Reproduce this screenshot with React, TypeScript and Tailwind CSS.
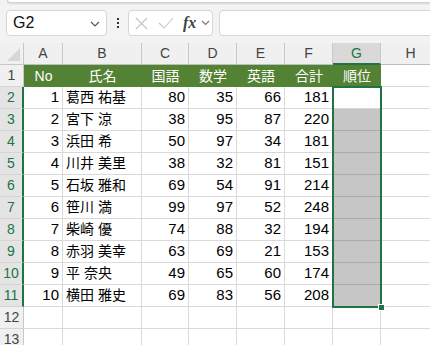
import React from "react";

const NUM = { fontFamily: '"Liberation Sans Narrow", "Liberation Sans", Arial, sans-serif' };
const JP = { fontFamily: '"Liberation Sans", "Noto Sans CJK JP", sans-serif' };

type Row = [number, string, number, number, number, number];
const data: Row[] = [
  [1, "葛西 祐基", 80, 35, 66, 181],
  [2, "宮下 涼", 38, 95, 87, 220],
  [3, "浜田 希", 50, 97, 34, 181],
  [4, "川井 美里", 38, 32, 81, 151],
  [5, "石坂 雅和", 69, 54, 91, 214],
  [6, "笹川 満", 99, 97, 52, 248],
  [7, "柴崎 優", 74, 88, 32, 194],
  [8, "赤羽 美幸", 63, 69, 21, 153],
  [9, "平 奈央", 49, 65, 60, 174],
  [10, "横田 雅史", 69, 83, 56, 208],
];

const W = {
  h: "w-[24px]",
  A: "w-[39px]",
  B: "w-[79px]",
  C: "w-[47px]",
  D: "w-[48px]",
  E: "w-[48px]",
  F: "w-[48px]",
  G: "w-[48px]",
  H: "w-[60px]",
};

function RowHeader({ n, sel }: { n: number; sel: boolean }) {
  return (
    <div
      className={
        "h-full shrink-0 flex items-center justify-center border-b text-[14px] " +
        W.h +
        (sel
          ? " bg-[#e4e4e4] text-[#217346] border-r-2 border-r-[#217346] border-b-[#d4d4d4]"
          : " bg-[#f0f0f0] text-[#444] border-r border-r-[#c8c8c8] border-b-[#d4d4d4]")
      }
      style={NUM}
    >
      {n}
    </div>
  );
}

function NumCell({ w, v }: { w: string; v: number | string }) {
  return (
    <div
      className={"h-full shrink-0 flex items-center justify-end pr-[3px] border-r border-b border-[#d9d9d9] text-[15px] text-black " + w}
      style={NUM}
    >
      {v}
    </div>
  );
}

export default function App() {
  const headerCols: [string, string][] = [
    ["A", W.A],
    ["B", W.B],
    ["C", W.C],
    ["D", W.D],
    ["E", W.E],
    ["F", W.F],
    ["G", W.G],
    ["H", W.H],
  ];
  const titles: [string, string][] = [
    ["No", W.A],
    ["氏名", W.B],
    ["国語", W.C],
    ["数学", W.D],
    ["英語", W.E],
    ["合計", W.F],
    ["順位", W.G],
  ];
  return (
    <div className="w-[430px] h-[345px] overflow-hidden bg-[#f3f3f3] relative" style={JP}>
      {/* top ribbon edge */}
      <div className="ml-[7px] h-[3px] bg-white rounded-bl-[6px] border-b border-l border-[#d2d2d2] shadow-[0_1px_2px_rgba(0,0,0,0.12)]" />
      {/* formula bar */}
      <div className="flex items-center h-[26px] mt-[7px]">
        <div className="ml-[6px] w-[101px] h-[26px] bg-white rounded-[4px] border border-[#d6d6d6] flex items-center justify-between pl-[6px] pr-[6px]">
          <span className="text-[16px] text-[#111]" style={NUM}>G2</span>
          <svg width="10" height="6" viewBox="0 0 10 6" className="mt-[1px]">
            <path d="M1 1 L5 5 L9 1" fill="none" stroke="#555" strokeWidth="1.2" />
          </svg>
        </div>
        <div className="w-[21px] flex flex-col items-center gap-[2px]">
          <div className="w-[2px] h-[2px] bg-[#333]" />
          <div className="w-[2px] h-[2px] bg-[#333]" />
          <div className="w-[2px] h-[2px] bg-[#333]" />
        </div>
        <div className="w-[85px] h-[26px] bg-white rounded-[4px] border border-[#d6d6d6] flex items-center pl-[6px]">
          <svg width="13" height="13" viewBox="0 0 13 13">
            <path d="M1 1 L12 12 M12 1 L1 12" stroke="#c4c4c4" strokeWidth="1.1" fill="none" />
          </svg>
          <svg width="16" height="12" viewBox="0 0 16 12" className="ml-[10px]">
            <path d="M1 6 L6 11 L15 1" stroke="#c4c4c4" strokeWidth="1.1" fill="none" />
          </svg>
          <span
            className="ml-[9px] text-[16px] italic font-bold text-[#444] leading-none"
            style={{ fontFamily: '"Liberation Serif", "Times New Roman", serif' }}
          >
            fx
          </span>
          <svg width="9" height="6" viewBox="0 0 9 6" className="ml-[5px]">
            <path d="M1 1 L4.5 4.5 L8 1" fill="none" stroke="#777" strokeWidth="1.1" />
          </svg>
        </div>
        <div className="ml-[6px] flex-1 mr-[-12px] h-[26px] bg-white rounded-[4px] border border-[#d6d6d6]" />
      </div>

      {/* grid */}
      <div className="absolute left-0 top-[43px] w-[430px]">
        {/* column headers */}
        <div className="flex h-[22px] bg-[#f0f0f0]">
          <div className={"h-full shrink-0 relative border-r border-b border-[#c8c8c8] " + W.h}>
            <svg width="16" height="14" viewBox="0 0 16 14" className="absolute left-[5px] top-[5px]">
              <path d="M15 0 L15 13 L2 13 Z" fill="#d6d6d6" />
            </svg>
          </div>
          {headerCols.map(([l, w]) =>
            l === "G" ? (
              <div
                key={l}
                className={"h-full shrink-0 flex items-center justify-center bg-[#d9d9d9] border-r border-r-[#c8c8c8] border-b-2 border-b-[#217346] text-[14px] text-[#217346] " + w}
                style={NUM}
              >
                {l}
              </div>
            ) : (
              <div
                key={l}
                className={"h-full shrink-0 flex items-center justify-center border-r border-b border-[#c8c8c8] border-b-[#bdbdbd] text-[14px] text-[#444] " + w}
                style={NUM}
              >
                {l}
              </div>
            )
          )}
        </div>

        {/* row 1 */}
        <div className="flex h-[22px] bg-white">
          <RowHeader n={1} sel={false} />
          {titles.map(([t, w]) => (
            <div
              key={t}
              className={"h-full shrink-0 flex items-center justify-center bg-[#548235] text-white text-[14px] " + w}
              style={t === "No" ? NUM : JP}
            >
              {t}
            </div>
          ))}
          <div className={"h-full shrink-0 border-r border-b border-[#d9d9d9] " + W.H} />
        </div>

        {/* data rows */}
        {data.map((r, i) => (
          <div key={i} className="flex h-[22px] bg-white">
            <RowHeader n={i + 2} sel={true} />
            <NumCell w={W.A} v={r[0]} />
            <div className={"h-full shrink-0 flex items-center pl-[3px] border-r border-b border-[#d9d9d9] text-[14px] text-black whitespace-nowrap " + W.B} style={JP}>
              {r[1]}
            </div>
            <NumCell w={W.C} v={r[2]} />
            <NumCell w={W.D} v={r[3]} />
            <NumCell w={W.E} v={r[4]} />
            <NumCell w={W.F} v={r[5]} />
            <div
              className={
                "h-full shrink-0 border-r border-b " +
                W.G +
                (i === 0 ? " bg-white border-[#d9d9d9]" : " bg-[#c6c6c6] border-[#d9d9d9] border-b-[#aaaaaa]")
              }
            />
            <div className={"h-full shrink-0 border-r border-b border-[#d9d9d9] " + W.H} />
          </div>
        ))}

        {/* empty rows */}
        {[12, 13].map((n) => (
          <div key={n} className="flex h-[22px] bg-white">
            <RowHeader n={n} sel={false} />
            {[W.A, W.B, W.C, W.D, W.E, W.F, W.G, W.H].map((w, j) => (
              <div key={j} className={"h-full shrink-0 border-r border-b border-[#d9d9d9] " + w} />
            ))}
          </div>
        ))}

        {/* selection border */}
        <div className="absolute left-[332px] top-[43px] w-[50px] h-[222px] border-2 border-[#217346] pointer-events-none" />
        <div className="absolute left-[378px] top-[261px] w-[7px] h-[7px] bg-white pointer-events-none" />
        <div className="absolute left-[379px] top-[262px] w-[5px] h-[5px] bg-[#217346] pointer-events-none" />
      </div>
    </div>
  );
}
